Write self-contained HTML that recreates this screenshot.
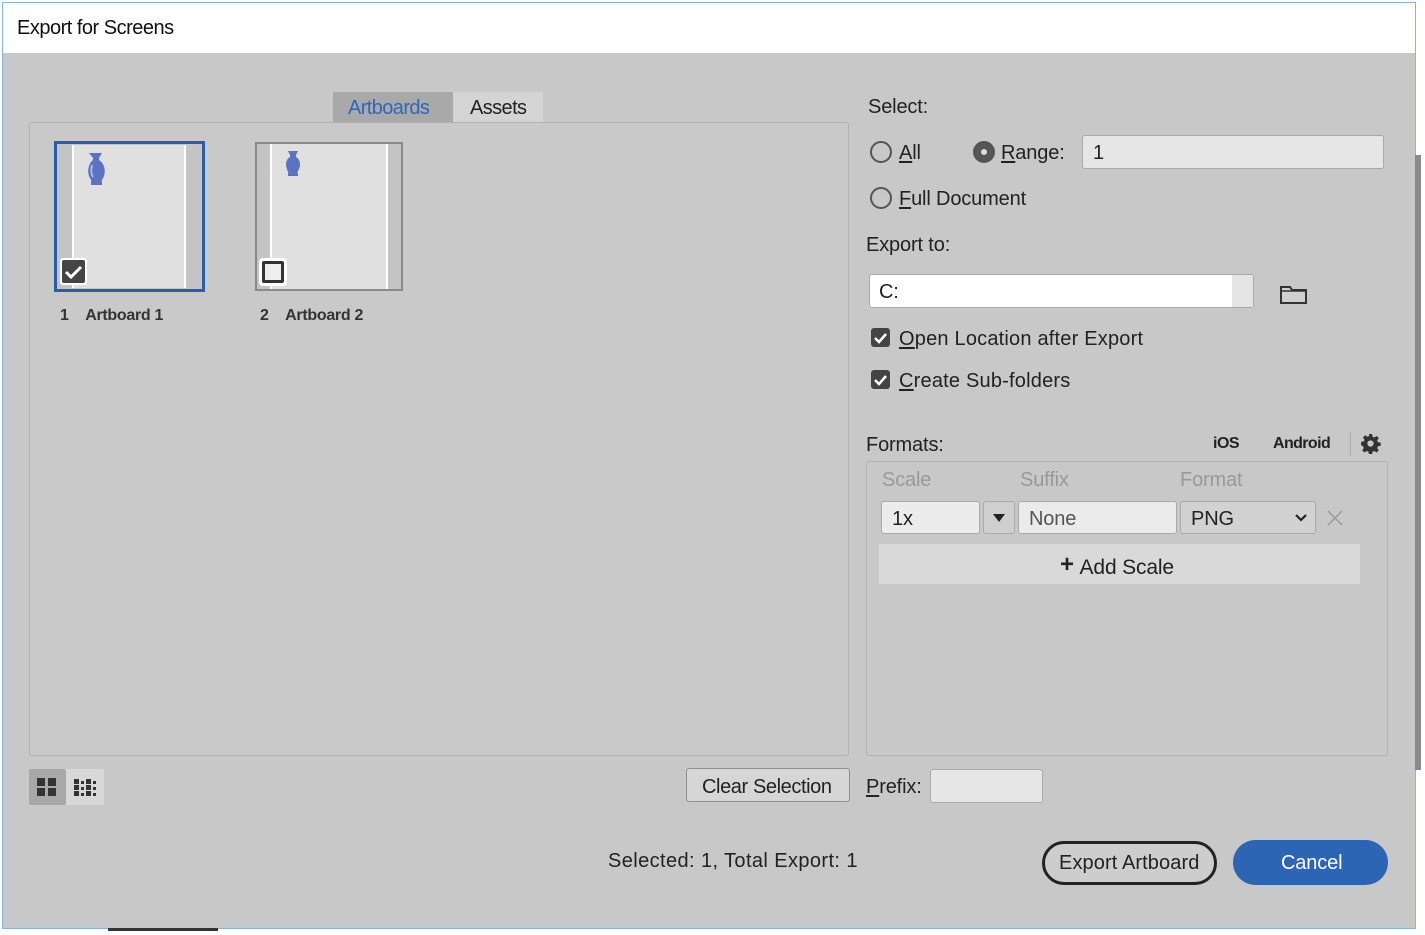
<!DOCTYPE html>
<html><head><style>
*{box-sizing:border-box;margin:0;padding:0}
body{width:1425px;height:935px;background:#fff;position:relative;overflow:hidden;font-family:"Liberation Sans",sans-serif;color:#222;letter-spacing:-0.15px}
.a{position:absolute}
.t{position:absolute;font-size:20px;white-space:nowrap}
u{text-decoration:underline;text-decoration-thickness:2px;text-underline-offset:2px}
.cb{position:absolute;width:19px;height:19px;background:#444;border-radius:3px}
.rad{position:absolute;width:22px;height:22px;border:2px solid #555;border-radius:50%}
</style></head><body>
<div class="a" style="left:2px;top:2px;width:1414px;height:927px;border:1px solid #8ab4e0;background:#c8c8c8"></div>
<div class="a" style="left:3px;top:3px;width:1412px;height:50px;background:#fff"></div>
<div class="t" style="left:17px;top:17px;font-size:20px;color:#111;letter-spacing:-0.5px">Export for Screens</div>
<div class="a" style="left:1415px;top:155px;width:6px;height:615px;background:#8a8a8a"></div>
<div class="a" style="left:108px;top:928px;width:110px;height:3px;background:#333"></div>

<div class="a" style="left:333px;top:92px;width:120px;height:30px;background:#a9a9a9"></div>
<div class="t" style="left:348px;top:97px;color:#2e67bb;letter-spacing:-0.6px">Artboards</div>
<div class="a" style="left:453px;top:92px;width:90px;height:30px;background:#d4d4d4"></div>
<div class="t" style="left:470px;top:97px;letter-spacing:-0.6px">Assets</div>
<div class="a" style="left:29px;top:122px;width:820px;height:634px;border:1px solid #b2b2b2;border-radius:3px;background:#c9c9c9"></div>
<div class="a" style="left:54px;top:141px;width:151px;height:151px;border:3px solid #2a5cb0;background:#c4c4c4"></div>
<div class="a" style="left:72px;top:145px;width:114px;height:143px;background:#e0e0e0;border-left:2px solid #fff;border-right:2px solid #fff"></div>
<svg class="a" style="left:83px;top:152px" width="26" height="36"><path d="M6 1h13l-3 5v2c5 3 7 10 5 16-1 3-3 4-2 6v3H8v-3c1-2-1-3-2-6-2-6 0-13 4-16v-2z" fill="#5b73c2"/><path d="M9 13c-1 4-1 9 1 12" stroke="#a9b8ea" stroke-width="2" fill="none"/></svg>
<div class="a" style="left:60px;top:258px;width:27px;height:27px;background:#fff;border-radius:3px"></div>
<div class="a" style="left:62px;top:260px;width:23px;height:23px;background:#444;border-radius:2px"></div>
<svg class="a" style="left:62px;top:260px" width="23" height="23"><path d="M4 12l5 5 10-10" stroke="#fff" stroke-width="3" fill="none"/></svg>
<div class="t" style="left:60px;top:307px;font-size:16px;letter-spacing:-0.3px;font-weight:bold;color:#333"><span style="font-weight:bold">1</span>&nbsp;&nbsp;&nbsp;&nbsp;Artboard 1</div>
<div class="a" style="left:255px;top:142px;width:148px;height:149px;border:2px solid #8a8a8a;background:#c4c4c4"></div>
<div class="a" style="left:270px;top:144px;width:118px;height:145px;background:#e0e0e0;border-left:2px solid #fff;border-right:2px solid #fff"></div>
<svg class="a" style="left:283px;top:150px" width="20" height="28"><path d="M5 1h10l-2 4v2c4 2 5 8 3 12-1 2-2 3-1 5v2H5v-2c1-2-1-3-1-5-2-4-1-10 3-12V5z" fill="#5b73c2"/></svg>
<div class="a" style="left:259px;top:258px;width:28px;height:28px;background:#fff;border-radius:4px"></div>
<div class="a" style="left:262px;top:261px;width:22px;height:22px;border:3px solid #333;background:#eee;border-radius:2px"></div>
<div class="t" style="left:260px;top:307px;font-size:16px;letter-spacing:-0.3px;font-weight:bold;color:#333">2&nbsp;&nbsp;&nbsp;&nbsp;Artboard 2</div>
<div class="a" style="left:29px;top:769px;width:75px;height:36px;background:#d8d8d8;border-radius:2px"></div>
<div class="a" style="left:29px;top:769px;width:37px;height:36px;background:#a8a8a8;border-radius:2px"></div>
<svg class="a" style="left:36px;top:777px" width="22" height="20"><rect x="1" y="1" width="8" height="8" fill="#333"/><rect x="12" y="1" width="8" height="8" fill="#333"/><rect x="1" y="11" width="8" height="8" fill="#333"/><rect x="12" y="11" width="8" height="8" fill="#333"/></svg>
<svg class="a" style="left:73px;top:778px" width="26" height="20"><g fill="#333"><rect x="1" y="1" width="5" height="5"/><rect x="8" y="3" width="3" height="3"/><rect x="13" y="1" width="5" height="5"/><rect x="20" y="3" width="3" height="3"/><rect x="1" y="7" width="5" height="5"/><rect x="8" y="9" width="3" height="3"/><rect x="13" y="7" width="5" height="5"/><rect x="20" y="9" width="3" height="3"/><rect x="1" y="13" width="5" height="5"/><rect x="8" y="15" width="3" height="3"/><rect x="13" y="13" width="5" height="5"/><rect x="20" y="15" width="3" height="3"/></g></svg>
<div class="a" style="left:686px;top:768px;width:164px;height:34px;background:#d6d6d6;border:1px solid #8f8f8f;border-radius:3px"></div>
<div class="t" style="left:702px;top:776px;letter-spacing:-0.4px">Clear Selection</div>
<div class="t" style="left:608px;top:850px;letter-spacing:0.4px">Selected: 1, Total Export: 1</div>

<div class="t" style="left:868px;top:96px">Select:</div>
<div class="rad" style="left:870px;top:141px"></div>
<div class="t" style="left:899px;top:142px"><u>A</u>ll</div>
<div class="rad" style="left:973px;top:141px;background:#555;border-color:#555"></div>
<div class="a" style="left:981px;top:149px;width:6px;height:6px;border-radius:50%;background:#ddd"></div>
<div class="t" style="left:1001px;top:142px"><u>R</u>ange:</div>
<div class="a" style="left:1082px;top:135px;width:302px;height:34px;background:#e6e6e6;border:1px solid #aaa;border-radius:3px"></div>
<div class="t" style="left:1093px;top:142px">1</div>
<div class="rad" style="left:870px;top:187px"></div>
<div class="t" style="left:899px;top:188px"><u>F</u>ull Document</div>
<div class="t" style="left:866px;top:234px">Export to:</div>
<div class="a" style="left:869px;top:274px;width:385px;height:34px;background:#fff;border:1px solid #aaa;border-radius:3px"></div>
<div class="a" style="left:1232px;top:275px;width:21px;height:32px;background:#e4e4e4"></div>
<div class="t" style="left:879px;top:281px">C:</div>
<svg class="a" style="left:1279px;top:283px" width="30" height="22"><path d="M2 4h9l2 3h14v13H2z" fill="#d0d0d0" stroke="#333" stroke-width="2"/><path d="M2 8h25" stroke="#333" stroke-width="1.5"/></svg>
<div class="cb" style="left:871px;top:328px"></div>
<svg class="a" style="left:871px;top:328px" width="19" height="19"><path d="M4 10l4 4 7-8" stroke="#fff" stroke-width="2.5" fill="none"/></svg>
<div class="t" style="left:899px;top:328px;letter-spacing:0.2px"><u>O</u>pen Location after Export</div>
<div class="cb" style="left:871px;top:370px"></div>
<svg class="a" style="left:871px;top:370px" width="19" height="19"><path d="M4 10l4 4 7-8" stroke="#fff" stroke-width="2.5" fill="none"/></svg>
<div class="t" style="left:899px;top:370px;letter-spacing:0.2px"><u>C</u>reate Sub-folders</div>
<div class="t" style="left:866px;top:434px">Formats:</div>
<div class="t" style="left:1213px;top:435px;font-size:16px;font-weight:bold;letter-spacing:-0.5px">iOS</div>
<div class="t" style="left:1273px;top:435px;font-size:16px;font-weight:bold;letter-spacing:-0.6px">Android</div>
<div class="a" style="left:1350px;top:432px;width:1px;height:24px;background:#aaa"></div>
<svg class="a" style="left:1360px;top:433px" width="21" height="21" viewBox="0 0 20 20"><path fill="#333" d="M8.5 1h3l.5 2.6 1.6.7 2.2-1.5 2.1 2.1-1.5 2.2.7 1.6 2.6.5v3l-2.6.5-.7 1.6 1.5 2.2-2.1 2.1-2.2-1.5-1.6.7-.5 2.6h-3l-.5-2.6-1.6-.7-2.2 1.5-2.1-2.1 1.5-2.2-.7-1.6L1 11.5v-3l2.6-.5.7-1.6-1.5-2.2 2.1-2.1 2.2 1.5 1.6-.7zM10 7a3 3 0 100 6 3 3 0 000-6z"/></svg>
<div class="a" style="left:866px;top:461px;width:522px;height:295px;border:1px solid #b2b2b2;border-radius:3px"></div>
<div class="t" style="left:882px;top:469px;color:#999">Scale</div>
<div class="t" style="left:1020px;top:469px;color:#999">Suffix</div>
<div class="t" style="left:1180px;top:469px;color:#999">Format</div>
<div class="a" style="left:881px;top:501px;width:99px;height:33px;background:#ececec;border:1px solid #aaa;border-radius:3px"></div>
<div class="t" style="left:892px;top:508px">1x</div>
<div class="a" style="left:983px;top:501px;width:32px;height:33px;background:#cfcfcf;border:1px solid #aaa;border-radius:3px"></div>
<svg class="a" style="left:992px;top:513px" width="14" height="10"><path d="M1 1h12L7 9z" fill="#222"/></svg>
<div class="a" style="left:1018px;top:501px;width:159px;height:33px;background:#ebebeb;border:1px solid #aaa;border-radius:3px"></div>
<div class="t" style="left:1029px;top:508px;color:#555">None</div>
<div class="a" style="left:1180px;top:501px;width:136px;height:33px;background:#d2d2d2;border:1px solid #aaa;border-radius:3px"></div>
<div class="t" style="left:1191px;top:508px">PNG</div>
<svg class="a" style="left:1294px;top:513px" width="14" height="10"><path d="M2 2l5 5 5-5" stroke="#222" stroke-width="2.2" fill="none"/></svg>
<svg class="a" style="left:1326px;top:509px" width="18" height="18"><path d="M2 2l14 14M16 2L2 16" stroke="#999" stroke-width="1.5"/></svg>
<div class="a" style="left:879px;top:544px;width:481px;height:40px;background:#d9d9d9"></div>
<div class="t" style="left:1060px;top:553px;font-size:21px"><b style="font-size:24px;position:relative;top:-2px">+</b>&nbsp;Add Scale</div>
<div class="t" style="left:866px;top:776px"><u>P</u>refix:</div>
<div class="a" style="left:930px;top:769px;width:113px;height:34px;background:#e6e6e6;border:1px solid #aaa;border-radius:3px"></div>
<div class="a" style="left:1042px;top:841px;width:175px;height:44px;border:3px solid #222;border-radius:22px;background:#cdcdcd"></div>
<div class="t" style="left:1059px;top:852px;letter-spacing:0.1px">Export Artboard</div>
<div class="a" style="left:1233px;top:840px;width:155px;height:45px;background:#2d65b5;border-radius:23px"></div>
<div class="t" style="left:1281px;top:852px;color:#fff">Cancel</div>
</body></html>
